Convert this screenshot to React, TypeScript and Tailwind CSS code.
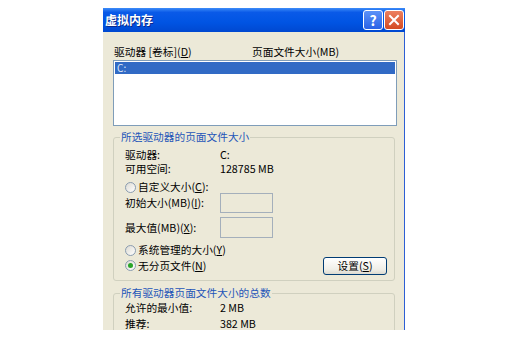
import type { ReactNode } from 'react';

function Radio({ checked = false }: { checked?: boolean }) {
  return (
    <span className="mr-[2px] flex h-[11px] w-[11px] shrink-0 items-center justify-center rounded-full border border-[#8a9cb0] bg-[linear-gradient(135deg,#dcdad2,#ffffff)]">
      {checked && <span className="h-[5px] w-[5px] rounded-full bg-[#2aa52a]" />}
    </span>
  );
}

function Mn({ children }: { children: ReactNode }) {
  return <span className="underline underline-offset-1">{children}</span>;
}

function Group({ title, children }: { title: string; children: ReactNode }) {
  return (
    <fieldset className="w-[282px] rounded-[3px] border border-[#d0d0bf]">
      <legend className="ml-[6px] px-[1px] leading-[14px] text-[#1f56b8]">{title}</legend>
      <div className="pl-[11px] pr-[7px]">{children}</div>
    </fieldset>
  );
}

export default function App() {
  return (
    <div className="h-[353px] w-[507px] overflow-hidden bg-white pt-[8px] font-['Noto_Sans_CJK_SC',sans-serif] text-[10.7px] leading-[14px] text-black">
      <div className="ml-[103px] w-[302px]">
        {/* title bar */}
        <div className="flex h-[24px] items-center justify-between bg-[linear-gradient(180deg,#3d8cf8_0%,#0a5ae8_18%,#0054e3_60%,#0048d0_100%)] pl-[2px] pr-[1px]">
          <span className="text-[12px] font-bold leading-[14px] text-white [text-shadow:1px_1px_0_#0a2a8a]">虚拟内存</span>
          <div className="flex gap-[1px]">
            <div className="flex h-[20px] w-[20px] items-center justify-center rounded-[3px] border border-white bg-[linear-gradient(180deg,#5c92f8,#2a62e6)] text-[14px] font-bold leading-none text-white">
              ?
            </div>
            <div className="flex h-[20px] w-[20px] items-center justify-center rounded-[3px] border border-white bg-[linear-gradient(180deg,#ec8060,#d44a22)]">
              <svg width="12" height="12" viewBox="0 0 12 12">
                <path d="M2 2 L10 10 M10 2 L2 10" stroke="#fff" strokeWidth="2" strokeLinecap="square" />
              </svg>
            </div>
          </div>
        </div>

        {/* body */}
        <div className="h-[298px] overflow-hidden border-r border-[#2d5ed4] bg-[#ece9d8] pl-[10px] pt-[13px]">
          <div className="flex h-[14px]">
            <span className="w-[139px] pl-[1px]">
              驱动器 [卷标](<Mn>D</Mn>)
            </span>
            <span>页面文件大小(MB)</span>
          </div>

          <div className="mt-[1px] h-[66px] w-[284px] border border-[#7f9db9] bg-white p-[1px]">
            <div className="h-[12px] bg-[#316ac5] pl-[2px] text-[10px] leading-[12px] text-[#dfe8f8]">C:</div>
          </div>

          <div className="mt-[4px]">
            <Group title="所选驱动器的页面文件大小">
              <div className="mt-[4px] flex h-[14px]">
                <span className="w-[95px]">驱动器:</span>
                <span>C:</span>
              </div>
              <div className="flex h-[14px]">
                <span className="w-[95px]">可用空间:</span>
                <span>128785 MB</span>
              </div>
              <div className="mt-[4px] flex h-[14px] items-center">
                <Radio />
                <span>
                  自定义大小(<Mn>C</Mn>):
                </span>
              </div>
              <div className="-mt-[1px] flex h-[20px] items-center">
                <span className="w-[95px]">
                  初始大小(MB)(<Mn>I</Mn>):
                </span>
                <div className="h-[20px] w-[53px] border border-[#a4afbb] bg-[#ece9d8]" />
              </div>
              <div className="mt-[4px] flex h-[21px] items-center">
                <span className="w-[95px]">
                  最大值(MB)(<Mn>X</Mn>):
                </span>
                <div className="h-[21px] w-[53px] border border-[#a4afbb] bg-[#ece9d8]" />
              </div>
              <div className="mt-[5px] flex h-[14px] items-center">
                <Radio />
                <span>
                  系统管理的大小(<Mn>Y</Mn>)
                </span>
              </div>
              <div className="flex h-[18px] items-center justify-between pb-[1px]">
                <div className="flex items-center">
                  <Radio checked />
                  <span>
                    无分页文件(<Mn>N</Mn>)
                  </span>
                </div>
                <button className="flex h-[18px] w-[64px] items-center justify-center rounded-[3px] border border-[#003c74] bg-[linear-gradient(180deg,#ffffff,#f0efe8_70%,#dcdad0)] text-[10.7px] leading-[14px] text-black">
                  设置(<Mn>S</Mn>)
                </button>
              </div>
              <div className="h-[5px]" />
            </Group>
          </div>

          <div className="mt-[5px]">
            <Group title="所有驱动器页面文件大小的总数">
              <div className="mt-[1px] flex h-[14px]">
                <span className="w-[95px]">允许的最小值:</span>
                <span>2 MB</span>
              </div>
              <div className="mt-[3px] flex h-[12px] leading-[12px]">
                <span className="w-[95px]">推荐:</span>
                <span>382 MB</span>
              </div>
              <div className="h-[20px]" />
            </Group>
          </div>
        </div>
      </div>
    </div>
  );
}
